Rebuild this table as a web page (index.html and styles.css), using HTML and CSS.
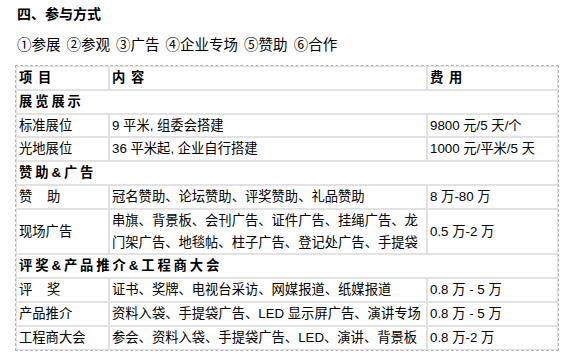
FILE: index.html
```html
<!DOCTYPE html>
<html lang="zh">
<head>
    <meta charset="UTF-8">
    <title>参与方式</title>
    <link rel="stylesheet" href="styles.css">
</head>
<body>
    <h3 class="title">四、参与方式</h3>
    <p class="ways">①参展 ②参观 ③广告 ④企业专场 ⑤赞助 ⑥合作</p>

    <table class="price">
        <colgroup>
            <col class="c1">
            <col class="c2">
            <col class="c3">
        </colgroup>
        <tr class="head">
            <td>项 目</td>
            <td>内 容</td>
            <td>费 用</td>
        </tr>
        <tr class="group">
            <td colspan="3">展览展示</td>
        </tr>
        <tr>
            <td>标准展位</td>
            <td>9 平米, 组委会搭建</td>
            <td>9800 元/5 天/个</td>
        </tr>
        <tr>
            <td>光地展位</td>
            <td>36 平米起, 企业自行搭建</td>
            <td>1000 元/平米/5 天</td>
        </tr>
        <tr class="group">
            <td colspan="3">赞助&amp;广告</td>
        </tr>
        <tr>
            <td>赞&nbsp;&nbsp;&nbsp;&nbsp;助</td>
            <td>冠名赞助、论坛赞助、评奖赞助、礼品赞助</td>
            <td>8 万-80 万</td>
        </tr>
        <tr>
            <td>现场广告</td>
            <td>串旗、背景板、会刊广告、证件广告、挂绳广告、龙门架广告、地毯帖、柱子广告、登记处广告、手提袋</td>
            <td>0.5 万-2 万</td>
        </tr>
        <tr class="group">
            <td colspan="3">评奖&amp;产品推介&amp;工程商大会</td>
        </tr>
        <tr>
            <td>评&nbsp;&nbsp;&nbsp;&nbsp;奖</td>
            <td>证书、奖牌、电视台采访、网媒报道、纸媒报道</td>
            <td>0.8 万 - 5 万</td>
        </tr>
        <tr>
            <td>产品推介</td>
            <td>资料入袋、手提袋广告、LED 显示屏广告、演讲专场</td>
            <td>0.8 万 - 5 万</td>
        </tr>
        <tr>
            <td>工程商大会</td>
            <td>参会、资料入袋、手提袋广告、LED、演讲、背景板</td>
            <td>0.8 万-2 万</td>
        </tr>
    </table>
</body>
</html>
```

FILE: styles.css
```css
html{
    font-family: "Liberation Sans", "Noto Sans CJK SC", sans-serif;
    color: #000;
}

body{
    margin: 0;
    padding: 5px 15px;
    background: #fff;
}

.title{
    font-size: 14px;
    font-weight: bold;
    line-height: 18px;
    margin: 0 0 0 2px;
}

.ways{
    font-size: 14.5px;
    line-height: 20px;
    margin: 12px 0 0 2px;
    word-spacing: 2px;
}

.price{
    margin-top: 10px;
    width: 544px;
    table-layout: fixed;
    border: 1px dashed #b5b5b5;
    border-collapse: separate;
    border-spacing: 0;
    font-size: 13.3px;
    line-height: 21.8px;
}

.c1{
    width: 93px;
}

.c2{
    width: 318px;
}

.price td{
    border: 1px solid #e2e2e2;
    padding: 0 1px 0 2px;
    vertical-align: middle;
}

.head td,
.group td{
    font-weight: bold;
}

.head td{
    word-spacing: 2px;
}

.group td{
    letter-spacing: 2.9px;
}
```
